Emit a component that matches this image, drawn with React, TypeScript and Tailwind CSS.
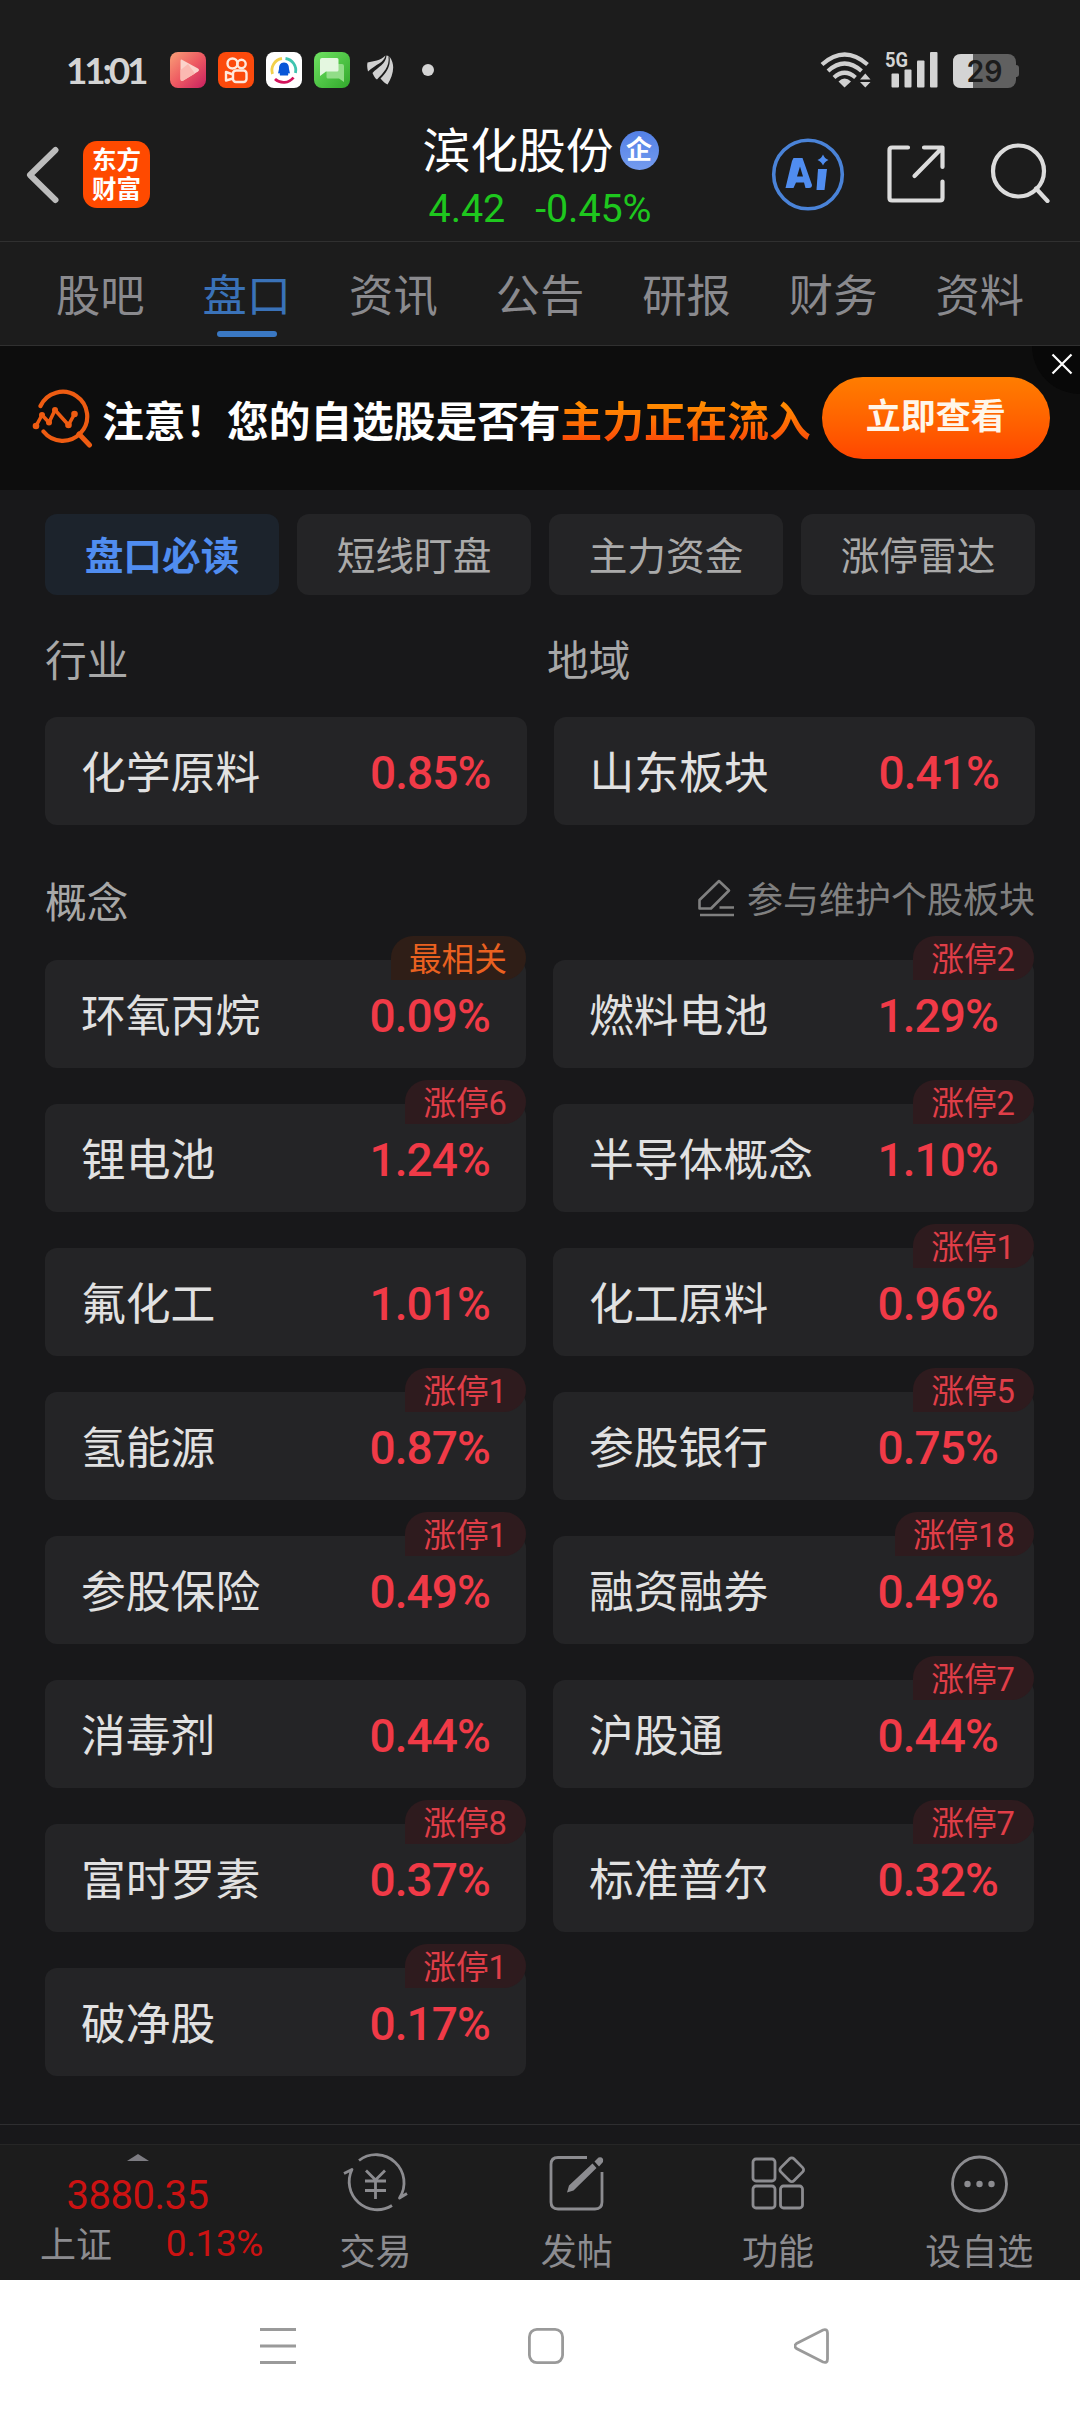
import React from "react";

interface Board {
  name: string;
  change: string;
  tag?: string;
  hot?: boolean;
}

const tabs = ["股吧", "盘口", "资讯", "公告", "研报", "财务", "资料"];

const filters = ["盘口必读", "短线盯盘", "主力资金", "涨停雷达"];

const concepts: Board[] = [
  { name: "环氧丙烷", change: "0.09%", tag: "最相关", hot: true },
  { name: "燃料电池", change: "1.29%", tag: "涨停2" },
  { name: "锂电池", change: "1.24%", tag: "涨停6" },
  { name: "半导体概念", change: "1.10%", tag: "涨停2" },
  { name: "氟化工", change: "1.01%" },
  { name: "化工原料", change: "0.96%", tag: "涨停1" },
  { name: "氢能源", change: "0.87%", tag: "涨停1" },
  { name: "参股银行", change: "0.75%", tag: "涨停5" },
  { name: "参股保险", change: "0.49%", tag: "涨停1" },
  { name: "融资融券", change: "0.49%", tag: "涨停18" },
  { name: "消毒剂", change: "0.44%" },
  { name: "沪股通", change: "0.44%", tag: "涨停7" },
  { name: "富时罗素", change: "0.37%", tag: "涨停8" },
  { name: "标准普尔", change: "0.32%", tag: "涨停7" },
  { name: "破净股", change: "0.17%", tag: "涨停1" },
];

const StatusBar = () => (
  <div className="flex h-[105px] items-start justify-between pt-[52px] pl-[66px] pr-[61px]">
    <div className="flex items-center">
      <span className="w-[104px] whitespace-nowrap font-['Lato'] text-[37px] leading-[36px] font-bold tracking-[-3.2px] text-[#d4d4d4]">
        11:01
      </span>
      <div className="flex gap-3">
        <svg className="size-9" viewBox="0 0 36 36">
          <defs>
            <linearGradient id="video" x1="0" y1="0" x2="1" y2="1">
              <stop offset="0" stopColor="#f9a077" />
              <stop offset="0.5" stopColor="#ee5a62" />
              <stop offset="1" stopColor="#c81f60" />
            </linearGradient>
          </defs>
          <rect width="36" height="36" rx="8" fill="url(#video)" />
          <path d="M11.5 7.500 L28 16.500 Q30 18 28 19.500 L12.500 29 Q10.500 29.500 10.500 27 V9 Q10.500 7 11.500 7.500Z" fill="#fbd3cc" />
          <path d="M10.500 18 L18 12 L25 21.500 L12.500 29 Q10.500 29.500 10.500 27Z" fill="#fbb9b2" />
        </svg>
        <svg className="size-9" viewBox="0 0 36 36" fill="none" stroke="#ffe9dd" strokeWidth="2.400">
          <rect width="36" height="36" rx="8" fill="#fc4a0c" stroke="none" />
          <circle cx="14.500" cy="11.500" r="5" />
          <circle cx="23.500" cy="12" r="4.200" />
          <rect x="15" y="18.500" width="13.500" height="11.500" rx="3" />
          <path d="M15 22.500 L8 20 V28.500 L15 26.500" strokeLinejoin="round" />
        </svg>
        <svg className="size-9" viewBox="0 0 36 36" fill="none">
          <rect width="36" height="36" rx="8" fill="#fff" />
          <path d="M6.500 22 A12 12 0 0 1 16 6.500" stroke="#f2d04a" strokeWidth="2.800" />
          <path d="M19.500 6.500 A12 12 0 0 1 29.500 21" stroke="#3fc4b0" strokeWidth="2.800" />
          <path d="M27.500 25.500 A12.500 12.500 0 0 1 9 27" stroke="#d3145c" strokeWidth="2.800" />
          <path d="M18 10.500 c4 0 5 3 5 6.500 l1 4.500 -1.500 -.5 -.5 2.500 h-8 l-.5-2.500 -1.500 .5 1-4.500 c0-3.500 1-6.500 5-6.500z" fill="#0756d8" />
        </svg>
        <svg className="size-9" viewBox="0 0 36 36">
          <defs>
            <linearGradient id="sms" x1="0" y1="0" x2="1" y2="1">
              <stop offset="0" stopColor="#6fe262" />
              <stop offset="1" stopColor="#31a82b" />
            </linearGradient>
          </defs>
          <rect width="36" height="36" rx="8" fill="url(#sms)" />
          <path d="M14 12 H28 Q30 12 30 14 V30 L25 26.500 H14 Q12.500 26.500 12.500 25 V14Z" fill="#92dd88" />
          <path d="M8 6 H23 Q24.500 6 24.500 7.500 V18 Q24.500 19.500 23 19.500 H12 L6 24 V8 Q6 6 8 6Z" fill="#e4f7e0" />
        </svg>
      </div>
      <svg className="ml-[17px] h-[30px] w-[27px]" viewBox="0 0 27 30" fill="#d0d0d0">
        <path d="M.5 7.500 C7 6 13 6 18.500 .500 C17 8 9 9 1 16.500 C0 12 0 10 .5 7.500Z" />
        <path d="M19.500 .5 C19 9 11 12 5.500 18 C7 21 8 23.500 10 24.500 C16 18 23 12 21.500 1Z" />
        <path d="M22.500 1.500 C24 12 19 17.500 13.500 23.500 C16 26.500 18 28.500 20.500 29.500 C26 21 29 10 22.500 1.500Z" />
      </svg>
      <span className="ml-[28px] size-3 rounded-full bg-[#d4d4d4]" />
    </div>
    <div className="flex items-start">
      <svg className="h-9 w-[52px]" viewBox="0 0 52 36" fill="none" stroke="#d0d0d0" strokeWidth="4.200">
        <path d="M2 12.500 Q24.500 -7.500 47.500 12.500" />
        <path d="M8 19 Q24.500 4 41.500 19" />
        <path d="M14 25.500 Q24.500 16 35.500 25.500" />
        <path d="M18.500 29.500 Q24.500 23.500 31 29.500 L24.500 35.500Z" fill="#d0d0d0" stroke="none" />
        <path d="M40 27.500 L45.300 21.500 L50.500 27.500Z M40 30 L45.300 35.500 L50.500 30Z" fill="#d0d0d0" stroke="none" />
      </svg>
      <svg className="-mt-1.5 ml-[13px] h-[42px] w-[55px]" viewBox="0 -6 55 42" fill="#d4d4d4">
        <text x="0" y="15" fontSize="21" fontWeight="700" fontFamily="Roboto" textLength="23" lengthAdjust="spacingAndGlyphs">
          5G
        </text>
        <rect x="6.500" y="21.500" width="7.500" height="14" rx="1" />
        <rect x="19.500" y="17.500" width="7" height="18" rx="1" />
        <rect x="32" y="8.500" width="7.500" height="27" rx="1" />
        <rect x="45" y="0" width="7.500" height="35.500" rx="1" />
      </svg>
      <svg className="ml-[13px] mt-0.5 h-[34px] w-[66px]" viewBox="0 0 66 34">
        <rect x="0" y="0" width="63" height="34" rx="8" fill="#606060" />
        <path d="M62 11 H63 Q66 11 66 14 V20 Q66 23 63 23 H62Z" fill="#606060" />
        <path d="M8 0 H20 V34 H8 Q0 34 0 26 V8 Q0 0 8 0Z" fill="#d4d4d4" />
        <text x="13.500" y="28" fontSize="30" fontWeight="600" fontFamily="Inter" fill="#1c1c1c" textLength="36" lengthAdjust="spacingAndGlyphs">
          29
        </text>
      </svg>
    </div>
  </div>
);

const TitleBar = () => (
  <div className="grid h-[136px] grid-cols-[1fr_auto_1fr]">
    <div className="flex items-start pt-9 pl-[25px]">
      <svg className="mt-[5px] h-[58px] w-[35px]" viewBox="0 0 35 58" fill="none" stroke="#bcbcbc" strokeWidth="6" strokeLinecap="round" strokeLinejoin="round">
        <path d="M30.500 4 L5 29 L30.500 54" />
      </svg>
      <div className="ml-[23px] flex size-[67px] flex-col items-center justify-center rounded-[14px] bg-[#ff4a00] text-[24.5px] leading-[29px] font-bold text-white">
        <span>东方</span>
        <span>财富</span>
      </div>
    </div>
    <div className="flex flex-col items-center pt-[19px]">
      <div className="flex items-center pl-px">
        <span className="text-[47.8px] leading-[56px] text-white">滨化股份</span>
        <span className="mb-1 ml-1.5 flex size-[39px] items-center justify-center rounded-full bg-linear-to-b from-[#5380e6] to-[#749bee] text-[26px] leading-none font-bold text-white">
          企
        </span>
      </div>
      <div className="mt-px flex gap-[30px] font-['Roboto'] text-[39.5px] leading-[56px] tracking-[-0.1px] text-[#1ec71e]">
        <span>4.42</span>
        <span>-0.45%</span>
      </div>
    </div>
    <div className="flex items-start justify-end pt-8 pr-7">
      <svg className="size-[74px]" viewBox="0 0 74 74">
        <circle cx="37" cy="37.500" r="34.300" fill="none" stroke="#4a83d8" strokeWidth="3.600" />
        <path d="M22.500 21 H31.500 L41 48 Q41 51 38 51 H34.500 L33 45.500 H25 L22.500 51 H14.500 L21 24Z M29 29.500 L26 39.500 H32Z" fill="#508df0" fillRule="evenodd" />
        <path d="M47 32 H56 L53.500 53 H45.500Z" fill="#508df0" />
        <path d="M52 17.500 Q53.500 21.500 57.500 23 Q53.500 24.500 52 28.500 Q50.500 24.500 46.500 23 Q50.500 21.500 52 17.500Z" fill="#508df0" />
      </svg>
      <svg className="mt-[8px] ml-[42px] size-[58px]" viewBox="0 0 58 58" fill="none" stroke="#dcdcdc" strokeWidth="4.200" strokeLinecap="round" strokeLinejoin="round">
        <path d="M21 2.500 H5 Q2.500 2.500 2.500 5 V53 Q2.500 55.500 5 55.500 H53 Q55.500 55.500 55.500 53 V36.500" />
        <path d="M37 2.500 H55.500 V22 M55 3 L27.500 31" />
      </svg>
      <svg className="mt-[4px] ml-[45px] size-[62px]" viewBox="0 0 62 62" fill="none" stroke="#dcdcdc" strokeWidth="4.200" strokeLinecap="round">
        <circle cx="28.500" cy="30" r="25.500" />
        <path d="M46 47.500 L57.500 60" />
      </svg>
    </div>
  </div>
);

const Banner = () => (
  <div className="relative flex h-[144px] items-center overflow-hidden bg-[#0d0d0d] pl-8">
    <svg className="mb-px h-[60px] w-[62px]" viewBox="0 0 62 60" fill="none" stroke="#ee5c12" strokeWidth="4.200" strokeLinecap="round" strokeLinejoin="round">
      <path d="M8.500 18 A24.500 24.500 0 1 1 11.500 43.500" />
      <path d="M47 46 L57.500 57" strokeWidth="5" />
      <path d="M4 38 L10 27 L17 34.500 L23 22 L36.500 37 L42.500 26" strokeWidth="3.600" />
      <g fill="#ee5c12" stroke="none">
        <circle cx="4" cy="38" r="3.300" />
        <circle cx="10" cy="27" r="3" />
        <circle cx="17" cy="34.500" r="3" />
        <circle cx="23" cy="22" r="3" />
        <circle cx="36.500" cy="37" r="3.300" />
        <circle cx="42.500" cy="26" r="3.300" />
      </g>
    </svg>
    <p className="mt-[9px] ml-2 flex whitespace-nowrap text-[41.7px] leading-[60px] font-bold text-white">
      注意！您的自选股是否有
      <span className="bg-linear-to-b from-[#ff8a00] from-20% to-[#fb4a08] to-80% bg-clip-text text-transparent">
        主力正在流入
      </span>
    </p>
    <button className="ml-[11px] h-[82px] w-[228px] rounded-full bg-linear-to-b from-[#ff7d00] to-[#ff4500] text-[35px] leading-[80px] font-bold text-[#fff6ea]">
      立即查看
    </button>
    <span className="absolute -top-12 -right-12 size-24 rounded-full bg-[#080808]" />
    <svg className="absolute top-[7px] right-[7px] size-[22px]" viewBox="0 0 22 22" stroke="#fff" strokeWidth="2.200">
      <path d="M1.500 1.500 L20.500 20.500 M20.500 1.500 L1.500 20.500" />
    </svg>
  </div>
);

const BoardCard = ({ name, change, tag, hot }: Board) => (
  <div className="relative flex h-[108px] items-center justify-between rounded-xl bg-[#242426] px-9 pt-[5px]">
    <span className="text-[44.8px] leading-[60px] text-[#e1e1e1]">{name}</span>
    <span className="mb-0.5 font-['Roboto'] text-[46px] leading-[60px] font-medium tracking-[-0.9px] text-[#f03a47]">
      {change}
    </span>
    {tag && (
      <span
        className={`absolute -top-6 right-0 h-11 rounded-[22px] rounded-bl-none pr-[19px] pl-[18px] text-[32.7px] leading-[49px] ${
          hot ? "bg-[#2f1e17] text-[#ea6120]" : "bg-[#2e1b1e] text-[#e03e48]"
        }`}
      >
        {tag}
      </span>
    )}
  </div>
);

const actions = [
  {
    label: "交易",
    icon: (
      <>
        <path d="M17 8.500 A28 28 0 0 1 57.500 46 L65 41.500" />
        <path d="M50 53.500 A28 28 0 0 1 10 17.500 L2 21.500" />
        <path d="M24 18.500 L33.500 28 L43 18.500 M23 29 H44 M23 38.500 H44 M33.500 28 V47" />
      </>
    ),
  },
  {
    label: "发帖",
    icon: (
      <>
        <path d="M44 5.500 H15 Q8 5.500 8 12.500 V50 Q8 57 15 57 H52 Q59 57 59 50 V20" />
        <path d="M24 40.500 L26 33.500 L49.500 11.500 L53.500 16 L30.500 38.500Z M51.500 9.500 L55.500 5.500 Q61 4.500 60 10 L56 14.500Z" fill="#8c8c90" stroke="none" />
      </>
    ),
  },
  {
    label: "功能",
    icon: (
      <>
        <rect x="8" y="7" width="22" height="22" rx="3" />
        <rect x="8" y="34" width="22" height="22" rx="3" />
        <rect x="35.500" y="34" width="22" height="22" rx="3" />
        <rect x="37.500" y="8.500" width="18.500" height="18.500" rx="3" transform="rotate(45 46.750 17.750)" />
      </>
    ),
  },
  {
    label: "设自选",
    icon: (
      <>
        <circle cx="33.500" cy="32" r="27" />
        <g fill="#8c8c90" stroke="none">
          <circle cx="21.500" cy="32" r="3.200" />
          <circle cx="33.500" cy="32" r="3.200" />
          <circle cx="45.500" cy="32" r="3.200" />
        </g>
      </>
    ),
  },
];

const Toolbar = () => (
  <div className="flex h-[136px] border-t border-[#262626] bg-[#1c1c1c]">
    <div className="flex w-[275px] flex-col items-center pt-[9px]">
      <svg className="h-[7px] w-[22px]" viewBox="0 0 22 7" fill="#7d7c82">
        <path d="M0 7 L11 0 L22 7Z" />
      </svg>
      <span className="mt-[10px] font-['Roboto'] text-[40px] leading-[50px] tracking-[-0.5px] text-[#cc1212]">3880.35</span>
      <div className="flex w-full items-center justify-between pr-3 pl-[40px] text-[36px] leading-[50px]">
        <span className="text-[#8c8c90]">上证</span>
        <span className="-mt-1 font-['Roboto'] text-[37px] tracking-[-0.4px] text-[#cc1212]">0.13%</span>
      </div>
    </div>
    {actions.map(({ label, icon }) => (
      <div key={label} className="flex flex-1 flex-col items-center pt-[7px] text-[#8c8c90]">
        <svg className="h-[64px] w-[67px]" viewBox="0 0 67 64" fill="none" stroke="#8c8c90" strokeWidth="2.800" strokeLinejoin="round">
          {icon}
        </svg>
        <span className="mt-2.5 text-[36px] leading-[54px]">{label}</span>
      </div>
    ))}
  </div>
);

const SystemNav = () => (
  <div className="flex h-[132px] items-center bg-white pl-[260px]">
    <svg className="size-9" viewBox="0 0 36 36" stroke="#9a9a9a" strokeWidth="3">
      <path d="M0 1.500 H36 M0 18 H36 M0 34.500 H36" />
    </svg>
    <svg className="ml-[232px] size-9" viewBox="0 0 36 36" fill="none" stroke="#9a9a9a" strokeWidth="2.800">
      <rect x="1.400" y="1.400" width="33.200" height="33.200" rx="7.500" />
    </svg>
    <svg className="ml-[230px] size-9" viewBox="0 0 36 36" fill="none" stroke="#9a9a9a" strokeWidth="2.800">
      <path d="M2.500 15.500 L29 2 Q33.500 0.500 33.500 5 V31 Q33.500 35.500 29 34 L2.500 20.500 Q-0.500 18 2.500 15.500Z" />
    </svg>
  </div>
);

const App = () => (
  <div className="flex h-[2412px] w-[1080px] flex-col overflow-hidden bg-[#18181a] font-['Roboto','Noto_Sans_CJK_SC',sans-serif]">
    <header className="bg-[#1c1c1c]">
      <StatusBar />
      <TitleBar />
      <nav className="grid h-[105px] grid-cols-7 border-y border-[#303030] px-[27px]">
        {tabs.map((tab) => (
          <div
            key={tab}
            className={`flex flex-col items-center pt-[25px] text-[44.3px] leading-[60px] ${
              tab === "盘口" ? "text-[#3a72b8]" : "text-[#8a8a8e]"
            }`}
          >
            {tab}
            {tab === "盘口" && <span className="mt-1 h-1.5 w-[60px] rounded-full bg-[#3a78c3]" />}
          </div>
        ))}
      </nav>
    </header>

    <Banner />

    <main className="flex-1 px-[45px] pt-6">
      <div className="grid grid-cols-4 gap-[18px]">
        {filters.map((label, i) => (
          <button
            key={label}
            className={`h-[81px] rounded-xl pt-[5px] text-[38.7px] ${
              i === 0 ? "bg-[#1c232c] font-bold text-[#508df0]" : "bg-[#242426] text-[#aaaaaa]"
            }`}
          >
            {label}
          </button>
        ))}
      </div>

      <div className="mt-[37px] grid grid-cols-2 gap-[14px] text-[41.7px] leading-[60px] text-[#a8a8a8]">
        <h2>行业</h2>
        <h2>地域</h2>
      </div>
      <div className="mt-[25px] grid grid-cols-2 gap-[27px]">
        <BoardCard name="化学原料" change="0.85%" />
        <BoardCard name="山东板块" change="0.41%" />
      </div>

      <div className="mt-[49px] flex h-[60px] items-center justify-between">
        <h2 className="text-[41.7px] leading-[60px] text-[#a8a8a8]">概念</h2>
        <a className="mb-[7px] flex items-center text-[36px] leading-[54px] text-[#808080]">
          <svg className="mr-3 mb-1.5 h-[38px] w-[37px]" viewBox="0 0 37 38" fill="none" stroke="#808080" strokeWidth="2.600" strokeLinejoin="round">
            <path d="M1.500 29.500 V21 L21 2 L31 11.500 L13 29.500Z M21.500 28.500 H36 M2 36 H36" />
          </svg>
          参与维护个股板块
        </a>
      </div>
      <div className="mt-[26px] mr-px grid grid-cols-2 gap-x-[27px] gap-y-9">
        {concepts.map((board) => (
          <BoardCard key={board.name} {...board} />
        ))}
      </div>
      <hr className="-mx-[45px] mt-12 border-[#2e2e30]" />
    </main>

    <Toolbar />
    <SystemNav />
  </div>
);

export default App;
